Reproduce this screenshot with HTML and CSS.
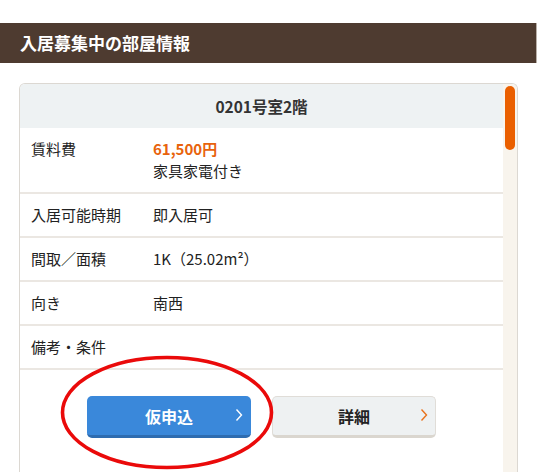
FILE: index.html
```html
<!DOCTYPE html>
<html lang="ja">
<head>
<meta charset="utf-8">
<link rel="stylesheet" href="styles.css">
</head>
<body>
<h2 class="page-title">入居募集中の部屋情報</h2>
<div class="card">
  <div class="card-main">
    <div class="card-head">0201号室2階</div>
    <div class="row">
      <div class="label">賃料費</div>
      <div class="value"><span class="price">61,500円</span><br>家具家電付き</div>
    </div>
    <div class="row">
      <div class="label">入居可能時期</div>
      <div class="value">即入居可</div>
    </div>
    <div class="row">
      <div class="label">間取／面積</div>
      <div class="value">1K（25.02m²）</div>
    </div>
    <div class="row">
      <div class="label">向き</div>
      <div class="value">南西</div>
    </div>
    <div class="row">
      <div class="label">備考・条件</div>
      <div class="value"></div>
    </div>
    <div class="actions">
      <a class="btn btn-primary">仮申込<svg class="chev" width="8" height="14" viewBox="0 0 8 14"><polyline points="1.5,1.5 6.5,7 1.5,12.5" fill="none" stroke="#ffffff" stroke-width="1.4"/></svg></a>
      <a class="btn btn-secondary">詳細<svg class="chev" width="8" height="14" viewBox="0 0 8 14"><polyline points="1.5,1.5 6.5,7 1.5,12.5" fill="none" stroke="#e8721c" stroke-width="1.4"/></svg></a>
    </div>
  </div>
  <div class="scrollbar"><div class="thumb"></div></div>
</div>
<svg class="annotation" width="216" height="117" viewBox="0 0 216 117"><ellipse cx="108" cy="58.5" rx="104.5" ry="55" fill="none" stroke="#ea0a0a" stroke-width="3.6"/></svg>
</body>
</html>
```
FILE: styles.css
```css
html, body {
  margin: 0;
  padding: 0;
  background: #ffffff;
  overflow: hidden;
}
body {
  font-family: "Noto Sans CJK JP", "Noto Sans", sans-serif;
  color: #222;
  position: relative;
  height: 472px;
}
.page-title {
  margin: 23px 0 0 0;
  width: 537px;
  height: 40px;
  box-sizing: border-box;
  border-right: 1px solid #b9b0a8;
  background: #4e3b30;
  color: #ffffff;
  font-size: 17px;
  font-weight: 700;
  line-height: 40px;
  padding-left: 20px;
}
.card {
  margin: 20px 0 0 19px;
  width: 499px;
  height: 389px;
  box-sizing: border-box;
  border: 1px solid #dcd8d2;
  border-bottom: 0;
  border-radius: 6px 6px 0 0;
  display: flex;
  overflow: hidden;
}
.card-main {
  flex: 1;
  display: flex;
  flex-direction: column;
}
.card-head {
  height: 44px;
  flex: none;
  background: #eef2f3;
  font-size: 15.5px;
  font-weight: 700;
  color: #333;
  display: flex;
  align-items: center;
  justify-content: center;
}
.row {
  display: flex;
  flex: none;
  padding: 10px 0 10px 11px;
  border-bottom: 2px solid #ebe7e2;
  font-size: 15px;
  line-height: 22px;
  color: #222;
}
.label {
  width: 122px;
  flex: none;
}
.value {
  flex: 1;
  min-height: 22px;
}
.price {
  color: #e8630c;
  font-weight: 700;
}
.actions {
  display: flex;
  justify-content: center;
  gap: 21px;
  padding-top: 26px;
}
.btn {
  width: 164px;
  height: 42px;
  box-sizing: border-box;
  border-radius: 5px;
  display: flex;
  align-items: center;
  justify-content: center;
  position: relative;
  font-size: 16px;
  font-weight: 700;
}
.btn-primary {
  background: #3a88da;
  border-bottom: 3px solid #2e6cb0;
  color: #ffffff;
}
.btn-secondary {
  background: #eef1f2;
  border: 1px solid #e0ddd8;
  border-bottom: 3px solid #dad6cf;
  color: #222;
}
.chev {
  position: absolute;
  right: 8px;
  top: 12px;
}
.btn-secondary .chev {
  right: 7px;
  top: 11px;
}
.scrollbar {
  width: 14px;
  flex: none;
  background: #f8f4ed;
  padding: 2px 2px 0 2px;
  box-sizing: border-box;
}
.thumb {
  height: 64px;
  border-radius: 5px;
  background: #ea5f00;
}
.annotation {
  position: absolute;
  left: 59px;
  top: 354px;
}
```
